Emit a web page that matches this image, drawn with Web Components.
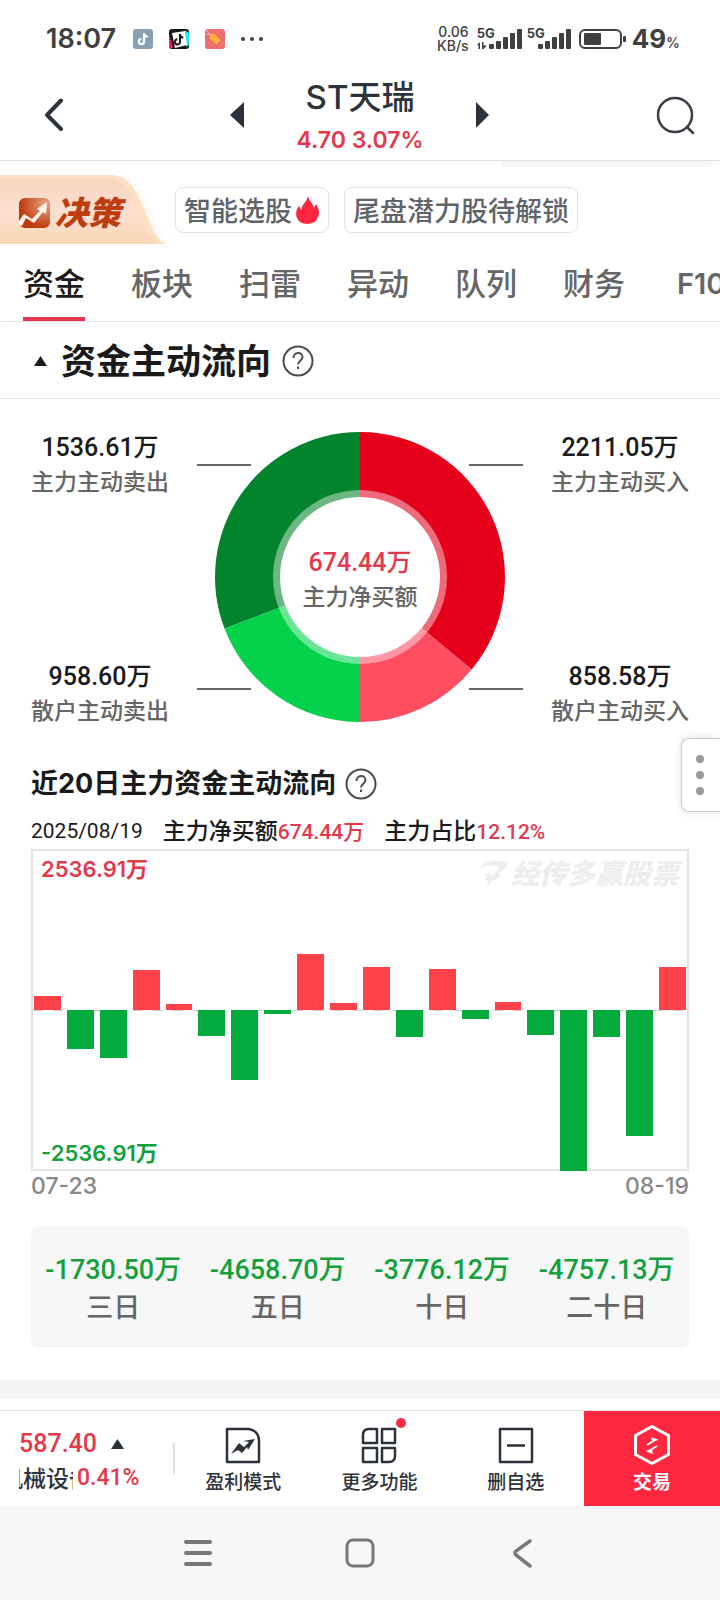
<!DOCTYPE html>
<html lang="zh-CN">
<head>
<meta charset="utf-8">
<meta name="viewport" content="width=device-width, initial-scale=1">
<title>ST天瑞 资金</title>
<style>
  html, body { margin: 0; }
  body {
    --ui: Inter, "Noto Sans CJK SC", sans-serif;
    --num: Roboto, "Noto Sans CJK SC", sans-serif;
    --ink: #1a1a1a; --slate: #2d333a; --grey: #666; --line: #e2e2e2;
    --red: #e23a4c; --green: #14a03c; --soft: #f7f7f7;
    font-family: var(--ui); font-weight: 500; color: var(--ink); background: #fff;
  }
</style>
</head>
<body>
<stock-app></stock-app>
<script>
const RESET = `*{box-sizing:border-box}h1,h2,h3,p,dl,dt,dd,button{margin:0;padding:0}
button{font:inherit;color:inherit;background:none;border:0;cursor:pointer}
a{color:inherit;text-decoration:none}svg{display:block;flex:none}`;

function define(name, css, html) {
  customElements.define(name, class extends HTMLElement {
    constructor() {
      super();
      const root = this.attachShadow({ mode: 'open' });
      const t = document.createElement('template');
      t.innerHTML = `<style>${RESET}${css}</style>${html}`;
      root.append(t.content.cloneNode(true));
    }
  });
}

const bars = (x) => [5, 8, 12, 16, 20].map((h, i) => `<rect x="${x + i * 7}" y="${20 - h}" width="5" height="${h}" rx="1"/>`).join('');

define('status-bar', `
:host{display:flex;align-items:center;height:78px;padding:0 40px 0 46px;color:#404040}
.time{font-size:27px;line-height:32px;font-weight:600;width:87px}
.apps{display:flex;align-items:center;gap:16px}
.right{margin-left:auto;display:flex;align-items:center}
.speed{font-size:14px;line-height:14px;text-align:right;width:32px}
.sim{display:flex;align-items:flex-start;margin-left:8px;position:relative}
.sim span{position:absolute;left:0;top:-2px;font-size:13px;line-height:13px;font-weight:700}
.sim + .sim{margin-left:5px}
.batt{margin:0 6px 0 8px}
.pct{display:flex;align-items:baseline;font-size:26px;line-height:32px;font-weight:700}
small{font-size:14px;line-height:14px;font-weight:500}`,
`<span class="time">18:07</span>
<div class="apps">
<svg width="20" height="20" viewBox="0 0 20 20"><rect width="20" height="20" rx="3" fill="#86a1b7"/><path d="M11 4v8.600a2.600 2.600 0 1 1-2.600-2.600M11 4.500c.3 2.200 1.800 3 3.800 3" fill="none" stroke="#fff" stroke-width="2.200"/></svg>
<svg width="20" height="20" viewBox="0 0 20 20"><rect width="20" height="20" rx="3" fill="#171717"/><path d="M0 5l4 14H2a2 2 0 0 1-2-2z" fill="#f5235c"/><path d="M16 1l4 3v12l-3 2z" fill="#25e5e5"/><path d="M3 4l13-2 2 14-12 3z" fill="#fff"/><path d="M11 5v7.500a2.600 2.600 0 1 1-2.600-2.200M11 6c.4 2 1.600 2.600 3.300 2.600" fill="none" stroke="#171717" stroke-width="2"/></svg>
<svg width="20" height="20" viewBox="0 0 20 20"><rect width="20" height="20" rx="3" fill="#ee706d"/><path d="M5 5l5 0 5.500 6.500-4 4L5 10z" fill="#ffae3c"/><path d="M1 1l5 5M1 5l5 1" stroke="#fbd" stroke-width=".8"/></svg>
<svg width="22" height="6" viewBox="0 0 22 6" fill="#404040"><circle cx="2" cy="3" r="2"/><circle cx="11" cy="3" r="2"/><circle cx="20" cy="3" r="2"/></svg>
</div>
<div class="right">
<div class="speed">0.06<br>KB/s</div>
<div class="sim"><span>5G</span><svg width="45" height="20" viewBox="0 0 45 20" fill="#404040"><path d="M0 16l3-3v7h-1.500v-3.500zM5 13h1.500v3.500H10l-3.500 3.500H5z"/>${bars(12)}</svg></div>
<div class="sim"><span>5G</span><svg width="44" height="20" viewBox="0 0 44 20" fill="#404040">${bars(11)}</svg></div>
<svg class="batt" width="47" height="20" viewBox="0 0 47 20"><rect x="1" y="1" width="41" height="18" rx="5" fill="none" stroke="#404040" stroke-width="2"/><rect x="5" y="4" width="17" height="12" rx="1" fill="#404040"/><rect x="44" y="7" width="3" height="6" rx="1" fill="#404040"/></svg>
<span class="pct">49<small>%</small></span>
</div>`);

define('stock-header', `
:host{display:grid;grid-template-columns:1fr auto 1fr;align-items:start;height:83px;border-bottom:1px solid var(--line);color:var(--slate)}
.back{justify-self:start;padding:20px 24px 0 44px}
.find{justify-self:end;padding:18px 24px 0 24px}
.mid{display:flex;align-items:flex-start}
.mid button{padding-top:24px}
.name{width:232px;text-align:center}
h1{font-size:33px;line-height:38px;font-weight:500}
p{font-size:23px;line-height:36px;margin-top:6px;color:var(--red);font-weight:600}`,
`<button class="back" aria-label="返回"><svg width="20" height="34" viewBox="0 0 20 34"><path d="M17 2.500L3 17l14 14" fill="none" stroke="#2d333a" stroke-width="4" stroke-linecap="round" stroke-linejoin="round"/></svg></button>
<div class="mid">
<button aria-label="上一只"><svg width="14" height="26" viewBox="0 0 14 26"><path d="M14 0v26L0 13z" fill="#2d333a"/></svg></button>
<div class="name"><h1>ST天瑞</h1><p>4.70 3.07%</p></div>
<button aria-label="下一只"><svg width="14" height="26" viewBox="0 0 14 26"><path d="M0 0v26l13-13z" fill="#2d333a"/></svg></button>
</div>
<button class="find" aria-label="搜索"><svg width="40" height="40" viewBox="0 0 40 40" fill="none" stroke="#3c3b45" stroke-width="2.500" stroke-linecap="round"><circle cx="19" cy="19" r="17"/><path d="M31 31l6 6"/></svg></button>`);

define('promo-row', `
:host{display:block}
.scrap{width:211px;height:6px;margin:0 8px 8px auto;background:#f5f5f5;border-radius:0 0 4px 4px}
.row{display:flex;align-items:center;height:69px;gap:15px}
.brand{position:relative;width:160px;height:69px;display:flex;align-items:center;gap:4px;padding:6px 0 0 19px;color:#bf3b10;font-size:33px;line-height:40px;font-weight:900;font-style:italic}
.brand svg,.brand span{position:relative}
.brand .bg{position:absolute;left:0;top:0}
.chip{display:flex;align-items:center;height:46px;padding:4px 8px 0;border:1px solid var(--line);border-radius:8px;font-size:27px;line-height:40px;color:#5f646b;white-space:nowrap}
.chip svg{margin:-4px 0 0 3px}`,
`<div class="scrap"></div>
<div class="row">
<a class="brand" href="#decision">
<svg class="bg" width="176" height="69" viewBox="0 0 176 69"><defs><linearGradient id="g" x1="0" y1="0" x2="0" y2="1"><stop offset="0" stop-color="#f9d5bd"/><stop offset=".5" stop-color="#fae0d2"/><stop offset="1" stop-color="#fbd6b5"/></linearGradient><filter id="s" x="-20%" y="-20%" width="140%" height="140%"><feGaussianBlur stdDeviation="4"/></filter></defs><path d="M0 3h114c18 0 24 13 31 31 7 17 14 33 25 35H0z" fill="#f3e6df" opacity=".6" filter="url(#s)"/><path d="M0 0h110c19 0 26 16 34 34 8 20 13 32 22 35H0z" fill="#fde0c2"/><path d="M0 4h108c17 0 22 13 30 31 8 19 12 29 20 34H0z" fill="url(#g)"/></svg>
<svg width="32" height="32" viewBox="0 0 32 32"><defs><radialGradient id="r" cx=".85" cy=".2" r=".8"><stop offset="0" stop-color="#e9a282"/><stop offset="1" stop-color="#bf3b10"/></radialGradient></defs><rect x="0" y="1" width="31" height="30" rx="6" fill="url(#r)"/><path d="M0 24l5-7 8 5 8-8-3-2 10-7-1 12-3-2-9 11-8-5-4 8-3-1z" fill="#fff3ea"/></svg>
<span>决策</span></a>
<a class="chip" href="#smart">智能选股<svg width="25" height="30" viewBox="0 0 25 30"><path d="M13 1c1 5 5 7 6 12l2-4c3 5 4 9 2 13a11 9 0 0 1-21 1C0 18 2 13 4 11l2 4c1-6 6-8 7-14z" fill="#ff273f"/></svg></a>
<a class="chip" href="#tail">尾盘潜力股待解锁</a>
</div>`);

define('tab-strip', `
:host{display:block;border-bottom:1px solid var(--line);overflow:hidden}
nav{display:flex;gap:46px;padding-left:23px;height:77px}
a{flex:none;white-space:nowrap;font-size:31px;line-height:40px;padding:20px 0 13px;color:var(--grey);border-bottom:4px solid transparent}
a[aria-current]{color:var(--ink);border-color:var(--red)}
a:last-child{font-size:29px;font-weight:600;padding-left:6px}`,
`<nav><a href="#zj" aria-current="page">资金</a><a href="#bk">板块</a><a href="#sl">扫雷</a><a href="#yd">异动</a><a href="#dl">队列</a><a href="#cw">财务</a><a href="#f10">F10</a></nav>`);

define('help-button', `:host{display:block;flex:none}button{display:block}`,
`<button aria-label="说明"><svg width="32" height="32" viewBox="0 0 32 32" fill="none" stroke="#4a4a4a" stroke-width="2"><circle cx="16" cy="16" r="14.500"/><path d="M11.500 13c0-3 2-5 4.500-5s4.500 1.700 4.500 4.200c0 3.400-4.500 3.600-4.500 7.300"/><path d="M16 21.500v2.500"/></svg></button>`);

define('section-title', `
:host{display:flex;align-items:center;height:77px;border-bottom:1px solid var(--line);padding:2px 0 0 34px}
h2{font-size:35px;line-height:48px;font-weight:700;margin:0 11px 0 14px}`,
`<svg width="13" height="10" viewBox="0 0 13 10"><path d="M6.500 0L13 10H0z" fill="#1a1a1a"/></svg><h2><slot></slot></h2><help-button></help-button>`);

define('flow-figure', `:host{display:block;text-align:center}
p{font:500 25px/36px var(--num);color:var(--fig,var(--ink))}
span{display:block;font-size:23px;line-height:32px;color:var(--grey)}
::slotted([slot=value]){font-weight:inherit}`,
`<p><slot name="value"></slot></p><span><slot></slot></span>`);

// The buys share the right half of the ring, the sells share the left half.
const CX = 163, CY = 147;
const pt = (r, deg) => { const a = deg * Math.PI / 180; return `${(CX + r * Math.sin(a)).toFixed(2)} ${(CY - r * Math.cos(a)).toFixed(2)}`; };
const wedge = (a, b, c) => `<path d="M${CX} ${CY}L${pt(145, a)}A145 145 0 0 1 ${pt(145, b)}z" fill="${c}"/>`;
const figure = (value, label, cls = '') => `<flow-figure class="${cls}"><span slot="value">${value}</span>${label}</flow-figure>`;

define('flow-donut', `
:host{display:grid;grid-template-columns:1fr 326px 1fr;padding-top:31px}
.col{display:flex;flex-direction:column;justify-content:space-between;height:297px}
.ring{display:grid;place-items:center;height:296px}
.ring>*{grid-area:1/1}
.net{--fig:var(--red);padding-top:2px}
.l{padding-left:3px}.r{padding-right:3px}`,
`<div class="col l">${figure('1536.61万', '主力主动卖出')}${figure('958.60万', '散户主动卖出')}</div>
<div class="ring"><svg width="326" height="296" viewBox="0 0 326 296">
<path d="M0 35h54M272 35h54M0 259h54M272 259h54" stroke="#666" stroke-width="2"/>
${wedge(0, 129.65, '#e6001b')}${wedge(129.65, 180, '#ff4d62')}${wedge(180, 249.15, '#05d24b')}${wedge(249.15, 360, '#02842c')}
<circle cx="163" cy="147" r="87" fill="#fff" fill-opacity=".42"/><circle cx="163" cy="147" r="80" fill="#fff"/></svg>
${figure('674.44万', '主力净买额', 'net')}</div>
<div class="col r">${figure('2211.05万', '主力主动买入')}${figure('858.58万', '散户主动买入')}</div>`);

const FLOW = [14, -39, -48, 40, 6, -26, -70, -4, 56, 7, 43, -27, 41, -9, 8, -25, -161, -27, -126, 43];
const bar = (v, i) => `<i class="${v < 0 ? 'dn' : 'up'}" style="grid-column:${i + 1};height:${Math.abs(v)}px"></i>`;

define('flow-chart', `
:host{display:block;padding:37px 31px 0}
.head{position:relative;display:flex;align-items:center;gap:9px}
h3{font-size:27px;line-height:40px;font-weight:700}
.more{position:absolute;right:-31px;top:-26px;width:39px;height:74px;border:1px solid #ccc;border-right:0;border-radius:8px 0 0 8px;background:#fff;box-shadow:0 0 8px #0002;padding-left:14px}
.info{display:flex;gap:20px;margin-top:13px;font-size:23px;line-height:28px;color:var(--ink);white-space:nowrap}
.info em,time{font:400 21px/28px var(--num)}
.info em{color:var(--red);font-weight:500}
.plot{position:relative;margin-top:3px;height:322px;border:2px solid #e4e4e4;background:repeating-linear-gradient(90deg,#ccc 0 10px,#fff 10px 20px) 0 159px/100% 1px no-repeat}
.bars{display:grid;grid-template:159px 159px/repeat(20,1fr);column-gap:6px;padding:0 1px}
.up{grid-row:1;align-self:end;background:#ff414a}
.dn{grid-row:2;align-self:start;background:#02ab3b}
.cap{position:absolute;left:8px;font-size:22px;line-height:26px;font-weight:600}
.hi{top:5px;color:var(--red)}.lo{bottom:3px;color:var(--green)}
.mark{position:absolute;right:8px;top:6px;display:flex;align-items:center;gap:4px;color:#eee;font-size:28px;line-height:34px;font-weight:900;font-style:italic}
.axis{display:flex;justify-content:space-between;font-size:23px;line-height:30px;color:#888}`,
`<div class="head"><h3>近20日主力资金主动流向</h3><help-button></help-button>
<button class="more" aria-label="更多"><svg width="8" height="40" viewBox="0 0 8 40" fill="#999"><circle cx="4" cy="4" r="4"/><circle cx="4" cy="20" r="4"/><circle cx="4" cy="36" r="4"/></svg></button></div>
<div class="info"><time>2025/08/19</time><span>主力净买额<em>674.44万</em></span><span>主力占比<em>12.12%</em></span></div>
<div class="plot"><div class="bars">${FLOW.map(bar).join('')}</div>
<span class="cap hi">2536.91万</span><span class="cap lo">-2536.91万</span>
<div class="mark"><svg width="28" height="28" viewBox="0 0 28 28" fill="#eee"><path d="M0 9C7 0 18-1 28 3c1 5-7 10-14 13l6-9C13 4 6 6 0 9zM5 15l8-4-2 4 8-2c4 4 0 7-6 8l-5 6 1-7H5l3-3z"/></svg><span>经传多赢股票</span></div></div>
<div class="axis"><span>07-23</span><span>08-19</span></div>`);

define('period-sums', `
:host{display:block;padding:25px 31px 32px;border-bottom:19px solid #f5f5f5}
dl{display:grid;grid-template-columns:repeat(4,1fr);background:var(--soft);border-radius:8px;text-align:center;padding:26px 0 20px}
dl>div{display:flex;flex-direction:column}
dd{font:500 27px/36px var(--num);color:var(--green)}
dt{order:2;font-size:27px;line-height:40px;color:var(--grey)}`,
`<dl>${[['三日', '-1730.50万'], ['五日', '-4658.70万'], ['十日', '-3776.12万'], ['二十日', '-4757.13万']].map(([k, v]) => `<div><dt>${k}</dt><dd>${v}</dd></div>`).join('')}</dl>`);

define('tool-bar', `
:host{display:grid;grid-template-columns:175px 1fr 1fr 1fr 136px;height:96px;border-top:1px solid var(--line);background:#fff;color:var(--slate)}
.tick{position:relative;padding:16px 0 0 19px;font-family:var(--num)}
.tick::after{content:"";position:absolute;right:0;top:32px;width:2px;height:31px;background:#ddd}
.a,.b{display:flex;align-items:center;color:var(--red);font-size:25px;line-height:34px}
.a{gap:14px}
.b{font-size:23px;line-height:30px;gap:4px}
.b span{width:54px;padding-top:4px;overflow:hidden;display:flex;justify-content:center;white-space:nowrap;color:var(--slate);font-size:23px}
button{position:relative;display:flex;flex-direction:column;align-items:center;gap:4px;padding-top:14px;font-size:19px;line-height:28px;white-space:nowrap}
.dot{position:absolute;left:calc(50% + 17px);top:7px;width:10px;height:10px;border-radius:5px;background:#f72b42}
.buy{background:#ff273f;color:#fff;font-weight:700}`,
`<div class="tick"><div class="a">587.40<svg width="13" height="10" viewBox="0 0 13 10"><path d="M6.500 0L13 10H0z" fill="#2d333a"/></svg></div><div class="b"><span>机械设备</span>0.41%</div></div>
<button><svg width="38" height="40" viewBox="0 0 38 40"><path d="M3 4h22q10 2 10 12v21H3z" fill="none" stroke="#2d333a" stroke-width="2.500" stroke-linejoin="round"/><path d="M7 29l8-11 5 4 5-5-6-1 12-2-7 11-1-3-5 6-4-3z" fill="#2d333a"/></svg>盈利模式</button>
<button><svg width="38" height="40" viewBox="0 0 38 40" fill="none" stroke="#2d333a" stroke-width="2.500" stroke-linejoin="round"><path d="M9 4h8v14H3v-8q0-6 6-6zM22 4h13v14H22zM3 23h14v14H3zM22 23h13v8q0 6-6 6h-7z"/></svg>更多功能<i class="dot"></i></button>
<button><svg width="38" height="40" viewBox="0 0 38 40" fill="none" stroke="#2d333a" stroke-width="2.500" stroke-linejoin="round"><path d="M3 4h32v33H3zM10 20.500h18"/></svg>删自选</button>
<button class="buy"><svg width="38" height="40" viewBox="0 0 38 40"><path d="M19 1.500l16.500 9v19L19 38.500l-16.500-9v-19z" fill="none" stroke="#fff" stroke-width="3" stroke-linejoin="round"/><path d="M14 20l9-5.500M24 21l-9 5.500" stroke="#fff" stroke-width="2"/><path d="M18 12l8 3-7 1zM20 29l-8-3 7-1z" fill="#fff"/></svg>交易</button>`);

define('system-nav', `
:host{display:grid;grid-template-columns:repeat(3,162px);justify-content:center;align-items:center;justify-items:center;height:94px;background:var(--soft)}`,
`<button aria-label="菜单"><svg width="28" height="28" viewBox="0 0 28 28"><path d="M2 3h24M2 14h24M2 25h24" stroke="#777" stroke-width="4" stroke-linecap="round"/></svg></button>
<button aria-label="主页"><svg width="30" height="30" viewBox="0 0 30 30"><rect x="2" y="2" width="26" height="26" rx="6" fill="none" stroke="#777" stroke-width="3"/></svg></button>
<button aria-label="返回"><svg width="20" height="30" viewBox="0 0 20 30"><path d="M18 3L4 13q-2 2 0 4l14 11" fill="none" stroke="#777" stroke-width="3.500" stroke-linecap="round"/></svg></button>`);

define('stock-app', `
:host{display:flex;flex-direction:column;min-height:100vh;overflow-x:clip}
main{flex:1}`,
`<status-bar></status-bar><stock-header></stock-header>
<main><promo-row></promo-row><tab-strip></tab-strip><section-title>资金主动流向</section-title>
<flow-donut></flow-donut><flow-chart></flow-chart><period-sums></period-sums></main>
<tool-bar></tool-bar><system-nav></system-nav>`);
</script>
</body>
</html>
